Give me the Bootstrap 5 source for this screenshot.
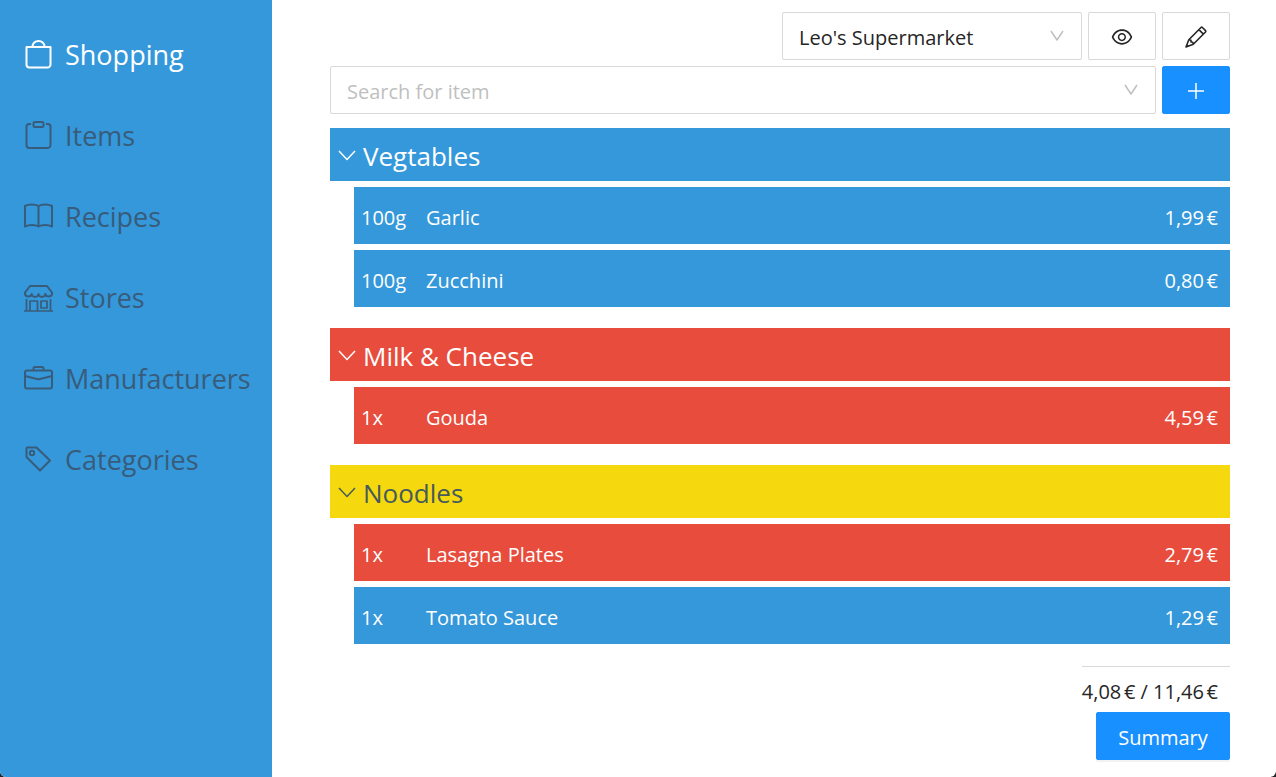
<!DOCTYPE html>
<html lang="en">
<head>
<meta charset="utf-8">
<meta name="viewport" content="width=device-width, initial-scale=1">
<title>Shopping</title>
<link href="https://cdn.jsdelivr.net/npm/bootstrap@5.3.0/dist/css/bootstrap.min.css" rel="stylesheet">
<style>
  :root { --blue: #3498db; --red: #e74c3c; --yellow: #f6d80f; --action: #1890ff; --slate: #385c7a; }
  html { background: #202428; }
  body { font-family: "Open Sans", "Noto Sans", sans-serif; font-size: 20px; line-height: 30px; color: #262626; background: transparent; }
  .app { background: #fff; border-radius: 0 0 6px 6px; overflow: hidden; }
  svg { display: block; fill: none; stroke: currentColor; stroke-linejoin: round; }

  .side { flex: 0 0 272px; background: var(--blue); padding: 22px 0 22px 24px; }
  .side .nav-link { display: flex; align-items: center; gap: 11px; height: 65px; margin-bottom: 16px; padding: 0; font-size: 27px; color: var(--slate); }
  .side .nav-link.active { color: #fff; }
  .side svg { flex: none; stroke-width: 2px; }

  .page { padding: 12px 46px 16px 58px; }
  .toolbars, .tools { gap: 6px; }
  .store-box { width: 300px; }
  .field { height: 48px; padding: 3px 40px 0 16px; font-size: 20px; color: #262626; border: 1px solid #d9d9d9; border-radius: 2px; background: #fff; }
  select.field { appearance: none; }
  .field::placeholder { color: #bfbfbf; opacity: 1; }
  .field-arrow { position: absolute; right: 18px; top: 18px; color: #bfbfbf; pointer-events: none; }
  .btn-tool { width: 68px; height: 48px; padding: 2px 0 0; border: 1px solid #d9d9d9; border-radius: 2px; background: #fff; color: #262626; display: flex; align-items: center; justify-content: center; }
  .btn-action { --bs-btn-color: #fff; --bs-btn-hover-color: #fff; background: var(--action); border-color: var(--action); color: #fff; }

  .lists { margin-top: 14px; gap: 21px; }
  .group-list { gap: 6px; }
  .group-head { height: 53px; padding: 2px 8px 0; gap: 7px; border: 0; font-size: 26px; color: #fff; text-align: left; }
  .item-rows { margin: 0 0 0 24px; padding: 0; gap: 6px; list-style: none; }
  .item-row { height: 57px; padding: 4px 12px 0 7px; color: #fff; }
  .amount { width: 65px; }
  .bg-blue { background: var(--blue); }
  .bg-red { background: var(--red); }
  .bg-yellow { background: var(--yellow); }
  .group-head.bg-yellow { color: #455a5c; }

  .total { margin-top: 22px; padding: 10px 12px 5px 0; border-top: 1px solid #d9d9d9; }
  .btn-summary { height: 48px; width: 134px; padding: 3px 0 0; border-radius: 2px; font-size: 20px; box-shadow: 0 2px 0 rgba(0,0,0,.05); }
</style>
</head>
<body>
<div class="app d-flex min-vh-100">
  <nav class="side nav flex-column flex-nowrap" aria-label="Main">
    <a class="nav-link active" href="#shopping" aria-current="page">
      <svg width="30" height="30" viewBox="0 0 30 30"><path d="M2.500 7h24v17.500a3 3 0 0 1-3 3h-18a3 3 0 0 1-3-3zM8.500 7V6.500a6 5.500 0 0 1 12 0V7"/></svg>
      Shopping
    </a>
    <a class="nav-link" href="#items">
      <svg width="30" height="30" viewBox="0 0 30 30"><path d="M7 3H5a2.500 2.500 0 0 0-2.500 2.500V24A3 3 0 0 0 5.500 27h18a3 3 0 0 0 3-3V5.500A2.500 2.500 0 0 0 24 3h-2"/><rect x="9.500" y="1" width="10" height="5" rx="1.500"/></svg>
      Items
    </a>
    <a class="nav-link" href="#recipes">
      <svg width="30" height="30" viewBox="0 0 30 30"><path d="M14.500 4C11 2 5 2 1 4V24.500c4-2 10-2 13.500 0C18 22.500 24 22.500 28 24.500V4c-4-2-10-2-13.500 0zM14.500 4V24.500"/></svg>
      Recipes
    </a>
    <a class="nav-link" href="#stores">
      <svg width="30" height="30" viewBox="0 0 30 30"><path d="M6 3h17l5 6.500v1.500a3.400 3 0 0 1-6.700 0a3.400 3 0 0 1-6.800 0a3.400 3 0 0 1-6.800 0A3.400 3 0 0 1 1 11V9.500z"/><path stroke-width="1.700" d="M0 28h29M2.500 16V28M26.500 16V28M6 28V18h7.500v10M17 18h6v7h-6z"/></svg>
      Stores
    </a>
    <a class="nav-link" href="#manufacturers">
      <svg width="30" height="30" viewBox="0 0 30 30"><rect x="1" y="6.500" width="27" height="18" rx="2"/><path d="M9.500 6V4.500A1.500 1.500 0 0 1 11 3h7a1.500 1.500 0 0 1 1.500 1.500V6M1 12l12 3q1.500.4 3 0l12-3"/></svg>
      Manufacturers
    </a>
    <a class="nav-link" href="#categories">
      <svg width="30" height="30" viewBox="0 0 30 30"><path d="M2.500 3.500a1 1 0 0 1 1-1h9l13.500 13L16 25.500 2.500 12z"/><circle cx="8" cy="8" r="2.200"/></svg>
      Categories
    </a>
  </nav>

  <main class="page flex-grow-1 d-flex flex-column">
    <div class="toolbars d-flex flex-column">
      <div class="tools d-flex justify-content-end">
        <div class="store-box position-relative">
          <select class="field w-100" aria-label="Store"><option>Leo's Supermarket</option></select>
          <svg class="field-arrow" width="14" height="12" viewBox="0 0 14 12" stroke-width="1.500"><path d="M1 1l6 9 6-9"/></svg>
        </div>
        <button class="btn btn-tool" type="button" aria-label="Show">
          <svg width="24" height="24" viewBox="0 0 1024 1024"><path fill="currentColor" stroke="none" d="M942.200 486.200C847.400 286.500 704.100 186 512 186c-192.200 0-335.400 100.500-430.200 300.300a60.300 60.300 0 000 51.500C176.600 737.500 319.900 838 512 838c192.200 0 335.400-100.500 430.200-300.300 7.700-16.200 7.700-35 0-51.500zM512 766c-161.300 0-279.400-81.800-362.700-254C232.600 339.800 350.700 258 512 258c161.300 0 279.400 81.800 362.700 254C791.500 684.200 673.400 766 512 766zm-4-430c-97.200 0-176 78.800-176 176s78.800 176 176 176 176-78.800 176-176-78.800-176-176-176zm0 288c-61.900 0-112-50.100-112-112s50.100-112 112-112 112 50.100 112 112-50.100 112-112 112z"/></svg>
        </button>
        <button class="btn btn-tool" type="button" aria-label="Edit">
          <svg width="24" height="24" viewBox="0 0 24 24" stroke-width="1.600"><path d="M2 22L4.800 14.800 17 2.500a1 1 0 0 1 1.400 0l3.100 3.100a1 1 0 0 1 0 1.400L9.300 19.200zM14.900 4.600l4.500 4.500M4.800 14.800l2.200.5v1.700l1.800.2.500 2M2.200 21.800l1.800-1.800"/></svg>
        </button>
      </div>
      <div class="tools d-flex">
        <div class="flex-grow-1 position-relative">
          <input class="field w-100" type="text" placeholder="Search for item" aria-label="Search for item">
          <svg class="field-arrow" width="14" height="12" viewBox="0 0 14 12" stroke-width="1.500"><path d="M1 1l6 9 6-9"/></svg>
        </div>
        <button class="btn btn-tool btn-action" type="button" aria-label="Add item">
          <svg width="18" height="18" viewBox="0 0 18 18" stroke-width="1.500"><path d="M9 1v16M1 9h16"/></svg>
        </button>
      </div>
    </div>

    <div class="lists d-flex flex-column">
      <section class="group-list d-flex flex-column">
        <button class="group-head bg-blue d-flex align-items-center w-100" type="button" data-bs-toggle="collapse" data-bs-target="#vegetables" aria-expanded="true">
          <svg width="18" height="12" viewBox="0 0 18 12" stroke-width="1.500"><path d="M1 1l8 8.500L17 1"/></svg>Vegtables
        </button>
        <div class="collapse show" id="vegetables">
          <ul class="item-rows d-flex flex-column">
            <li class="item-row bg-blue d-flex align-items-center"><span class="amount">100g</span><span class="flex-grow-1">Garlic</span><span>1,99&#8239;€</span></li>
            <li class="item-row bg-blue d-flex align-items-center"><span class="amount">100g</span><span class="flex-grow-1">Zucchini</span><span>0,80&#8239;€</span></li>
          </ul>
        </div>
      </section>
      <section class="group-list d-flex flex-column">
        <button class="group-head bg-red d-flex align-items-center w-100" type="button" data-bs-toggle="collapse" data-bs-target="#milk" aria-expanded="true">
          <svg width="18" height="12" viewBox="0 0 18 12" stroke-width="1.500"><path d="M1 1l8 8.500L17 1"/></svg>Milk &amp; Cheese
        </button>
        <div class="collapse show" id="milk">
          <ul class="item-rows d-flex flex-column">
            <li class="item-row bg-red d-flex align-items-center"><span class="amount">1x</span><span class="flex-grow-1">Gouda</span><span>4,59&#8239;€</span></li>
          </ul>
        </div>
      </section>
      <section class="group-list d-flex flex-column">
        <button class="group-head bg-yellow d-flex align-items-center w-100" type="button" data-bs-toggle="collapse" data-bs-target="#noodles" aria-expanded="true">
          <svg width="18" height="12" viewBox="0 0 18 12" stroke-width="1.500"><path d="M1 1l8 8.500L17 1"/></svg>Noodles
        </button>
        <div class="collapse show" id="noodles">
          <ul class="item-rows d-flex flex-column">
            <li class="item-row bg-red d-flex align-items-center"><span class="amount">1x</span><span class="flex-grow-1">Lasagna Plates</span><span>2,79&#8239;€</span></li>
            <li class="item-row bg-blue d-flex align-items-center"><span class="amount">1x</span><span class="flex-grow-1">Tomato Sauce</span><span>1,29&#8239;€</span></li>
          </ul>
        </div>
      </section>
    </div>

    <div class="total align-self-end">4,08&#8239;€ / 11,46&#8239;€</div>
    <button class="btn btn-action btn-summary align-self-end" type="button">Summary</button>
  </main>
</div>
<script src="https://cdn.jsdelivr.net/npm/bootstrap@5.3.0/dist/js/bootstrap.bundle.min.js"></script>
</body>
</html>
